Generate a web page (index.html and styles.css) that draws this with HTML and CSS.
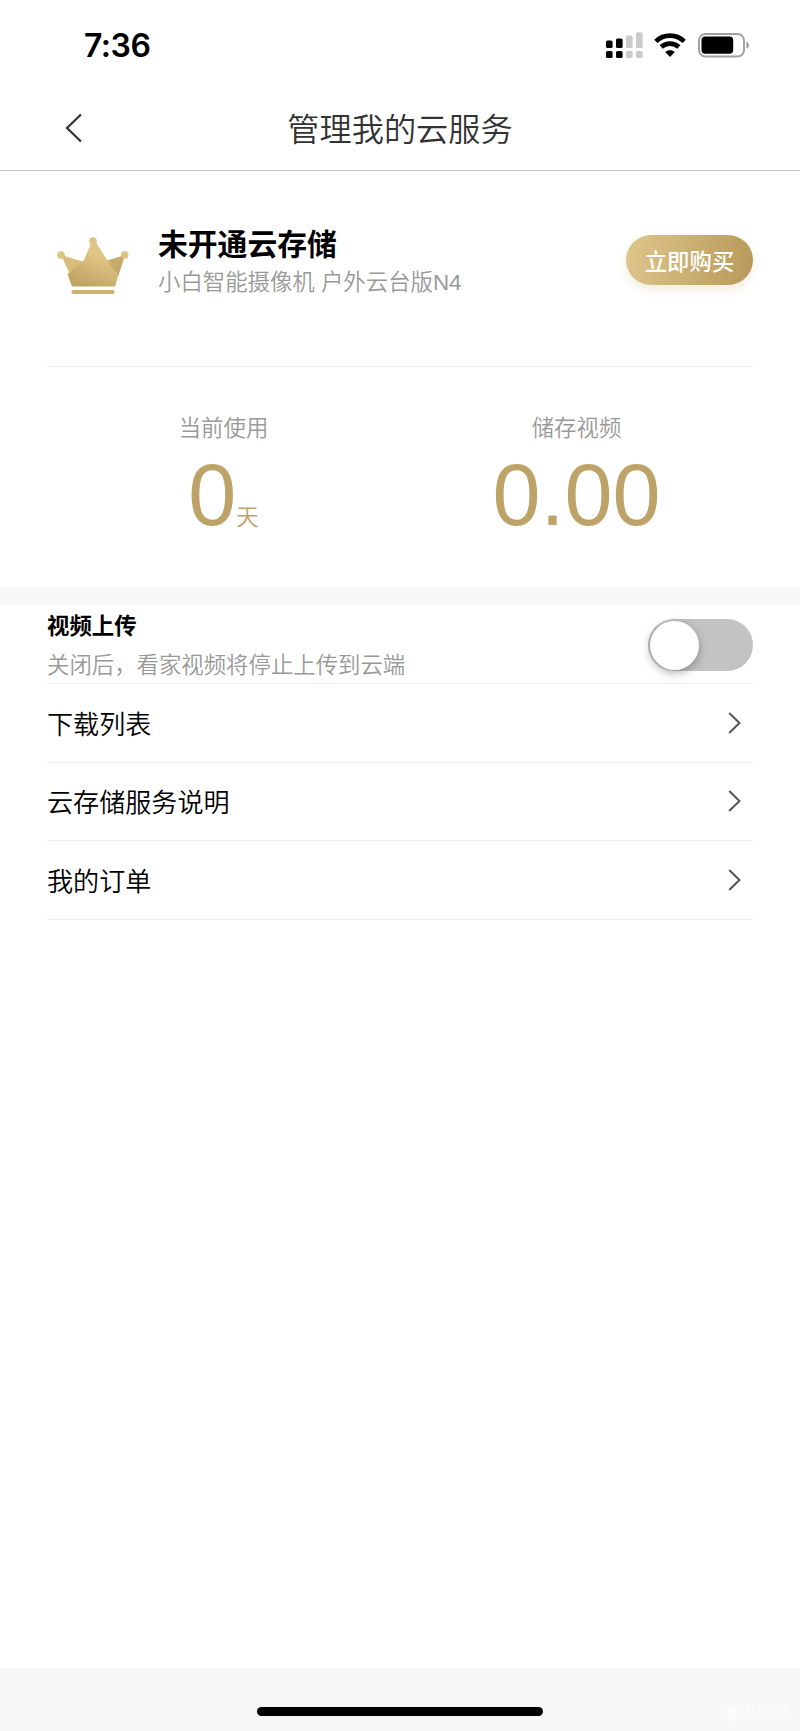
FILE: index.html
```html
<!DOCTYPE html>
<html lang="zh-CN">
<head>
    <meta charset="UTF-8">
    <meta name="viewport" content="width=device-width, initial-scale=1.0">
    <title>管理我的云服务</title>
    <link rel="stylesheet" href="styles.css">
</head>
<body>
    <div class="status-bar">
        <span class="time">7:36</span>
        <div class="status-icons">
            <svg class="signal" width="37" height="26" viewBox="0 0 37 26">
                <rect x="0" y="8.5" width="6.6" height="7.5" rx="1.6"/>
                <rect x="10" y="6.5" width="6.6" height="9.5" rx="1.6"/>
                <rect x="0" y="19" width="6.6" height="7" rx="1.6"/>
                <rect x="10" y="19" width="6.6" height="7" rx="1.6"/>
                <g fill="#cbcbcb">
                    <rect x="20" y="3.5" width="6.6" height="12.5" rx="1.6"/>
                    <rect x="30" y="0.3" width="6.6" height="15.7" rx="1.6"/>
                    <rect x="20" y="19" width="6.6" height="7" rx="1.6"/>
                    <rect x="30" y="19" width="6.6" height="7" rx="1.6"/>
                </g>
            </svg>
            <svg class="wifi" width="32" height="24" viewBox="0 0 32 24">
                <path d="M1.8 8.4C9.8.7 22.2.7 30.2 8.400" fill="none" stroke="#000" stroke-width="4.6"/>
                <path d="M7.2 14c4.900-4.500 12.700-4.500 17.600 0" fill="none" stroke="#000" stroke-width="4.6"/>
                <path d="M11.2 19c2.7-2.500 6.900-2.500 9.600 0L16 24z"/>
            </svg>
            <svg class="battery" width="52" height="25" viewBox="0 0 52 25">
                <rect x="1" y="1" width="45" height="22.5" rx="6.5" fill="none" stroke="#a0a0a0" stroke-width="1.9"/>
                <rect x="3.5" y="3.5" width="31.7" height="17.3" rx="3.7"/>
                <path d="M48.5 8.7c3 1 3 6 0 7z" fill="#909090"/>
            </svg>
        </div>
    </div>

    <header class="header">
        <svg class="back" width="18" height="30" viewBox="0 0 18 30">
            <path d="M16 1.5 2 15 16 28.5" fill="none" stroke="#333" stroke-width="2.2"/>
        </svg>
        <h1>管理我的云服务</h1>
    </header>

    <section class="service">
        <div class="service-info">
            <svg class="crown" width="72" height="58" viewBox="0 0 72 58">
                <defs>
                    <linearGradient id="gold" x1="0.6" y1="0.3" x2="0.3" y2="1">
                        <stop offset="0" stop-color="#e1c584"/>
                        <stop offset="1" stop-color="#bea363"/>
                    </linearGradient>
                    <linearGradient id="side" x1="0" y1="0" x2="1" y2="1">
                        <stop offset="0" stop-color="#ceb270"/>
                        <stop offset="1" stop-color="#bea264"/>
                    </linearGradient>
                </defs>
                <path d="M4 18 27 25 16 44z" fill="#d8bc7a"/>
                <path d="M68 18 45 25 61 40z" fill="url(#side)"/>
                <path d="M35 4h3L55 30.500 61.500 38 58 49.500H15L10.500 37 27 23z" fill="url(#gold)"/>
                <circle cx="36" cy="4" r="3.8" fill="#dfc382"/>
                <circle cx="4" cy="18" r="3.8" fill="#dfc382"/>
                <circle cx="67.7" cy="18" r="3.8" fill="#dfc382"/>
                <rect x="14.500" y="53" width="43" height="4" rx="1.8" fill="#cfb16e"/>
            </svg>
            <div class="service-text">
                <h2>未开通云存储</h2>
                <p>小白智能摄像机 户外云台版N4</p>
            </div>
            <button class="btn-buy">立即购买</button>
        </div>
        <div class="stats">
            <div class="stat">
                <p class="stat-label">当前使用</p>
                <p class="stat-value">0<span class="unit">天</span></p>
            </div>
            <div class="stat">
                <p class="stat-label">储存视频</p>
                <p class="stat-value">0.00</p>
            </div>
        </div>
    </section>

    <main class="settings">
        <div class="upload">
            <div>
                <h3>视频上传</h3>
                <p>关闭后，看家视频将停止上传到云端</p>
            </div>
            <div class="switch"><div class="knob"></div></div>
        </div>
        <div class="row">
            <span>下载列表</span>
            <svg width="13" height="22" viewBox="0 0 13 22"><path d="M1.2 1 11.500 11 1.200 21"/></svg>
        </div>
        <div class="row">
            <span>云存储服务说明</span>
            <svg width="13" height="22" viewBox="0 0 13 22"><path d="M1.2 1 11.500 11 1.200 21"/></svg>
        </div>
        <div class="row">
            <span>我的订单</span>
            <svg width="13" height="22" viewBox="0 0 13 22"><path d="M1.2 1 11.500 11 1.200 21"/></svg>
        </div>
    </main>

    <footer class="footer">
        <div class="home-indicator"></div>
        <div class="watermark">
            <svg width="24" height="24" viewBox="0 0 24 24">
                <circle cx="12" cy="12" r="10.8" fill="none" stroke="#fff" stroke-width="1.2"/>
                <path d="M4.5 12.5C4 8 8 4.500 12 4.500s8 3.500 7.500 8c-1 2-4 2-5 1l.8 5c0 2-6.600 2-6.600 0l.8-5c-1 1-4 1-5-1z" fill="#fff"/>
            </svg>
            <div class="watermark-text">
                <span>亿智蘑菇</span>
                <small>www.yizmg.com</small>
            </div>
        </div>
    </footer>
</body>
</html>
```
FILE: styles.css
```css
* {
    margin: 0;
    padding: 0;
    box-sizing: border-box;
}

body {
    font-family: "Liberation Sans", "Noto Sans CJK SC", sans-serif;
    height: 1731px;
    display: flex;
    flex-direction: column;
    background: #fff;
    color: #000;
    font-weight: 350;
}

/* Status bar */
.status-bar {
    height: 90px;
    padding: 0 50px 0 84px;
    display: flex;
    justify-content: space-between;
    align-items: center;
}

.time {
    font-family: Inter, sans-serif;
    font-size: 32px;
    font-weight: 600;
    letter-spacing: -0.5px;
}

.status-icons {
    display: flex;
    align-items: center;
}

.wifi {
    margin: 0 12px 0 11px;
}

/* Title bar */
.header {
    height: 81px;
    padding: 0 65px;
    display: grid;
    grid-template-columns: 18px 1fr 18px;
    align-items: center;
    border-bottom: 1px solid #c8c8c8;
}

.back {
    margin-top: -4px;
}

.header h1 {
    font-size: 32.2px;
    font-weight: 350;
    line-height: 40px;
    color: #333;
    text-align: center;
}

/* Cloud service card */
.service {
    height: 434px;
    padding: 0 47px;
    border-bottom: 18px solid #f7f7f7;
}

.service-info {
    height: 196px;
    padding: 50px 0 0 10px;
    display: flex;
    align-items: flex-start;
    border-bottom: 1px solid #eee;
}

.crown {
    margin: 16px 29px 0 0;
}

.service-text {
    flex: 1;
    padding-top: 2px;
}

.service-text h2 {
    font-size: 29.8px;
    font-weight: 700;
    line-height: 44px;
}

.service-text p {
    font-size: 22.4px;
    line-height: 32px;
    color: #999;
}

.btn-buy {
    width: 127px;
    height: 50px;
    margin-top: 14px;
    border: none;
    border-radius: 25px;
    background: linear-gradient(100deg, #dfc68b, #b6995a);
    box-shadow: 0 5px 10px rgba(190, 163, 99, 0.2);
    color: #fff;
    font-family: inherit;
    font-size: 22.4px;
    font-weight: 500;
}

.stats {
    display: flex;
    padding-top: 46px;
    text-align: center;
}

.stat {
    flex: 1;
}

.stat-label {
    font-size: 22.4px;
    line-height: 32px;
    color: #999;
}

.stat-value {
    font-size: 86.4px;
    line-height: 100px;
    color: #bda368;
}

.unit {
    font-size: 22.4px;
}

/* Settings list */
.settings {
    flex: 1;
    padding: 0 47px;
}

.upload {
    height: 79px;
    padding-top: 2px;
    display: flex;
    justify-content: space-between;
    align-items: center;
    border-bottom: 1px solid #eee;
}

.upload h3 {
    font-size: 22.4px;
    font-weight: 700;
    line-height: 39px;
    padding-top: 2px;
}

.upload p {
    font-size: 22.4px;
    line-height: 39px;
    color: #999;
}

.switch {
    width: 105px;
    height: 52px;
    padding: 2px;
    border-radius: 26px;
    background: #c3c3c3;
}

.knob {
    width: 49px;
    height: 49px;
    border-radius: 50%;
    background: #fff;
    box-shadow: 0 3px 10px rgba(0, 0, 0, 0.3);
}

.row {
    height: 78.6px;
    padding-right: 12px;
    display: flex;
    justify-content: space-between;
    align-items: center;
    border-bottom: 1px solid #eee;
    font-size: 26.1px;
}

.row path {
    fill: none;
    stroke: #555;
    stroke-width: 2;
}

/* Bottom area */
.footer {
    position: relative;
    height: 63px;
    padding-top: 39px;
    background: #f7f7f7;
}

.home-indicator {
    width: 286px;
    height: 9px;
    margin: 0 auto;
    border-radius: 5px;
    background: #000;
}

.watermark {
    position: absolute;
    right: 10px;
    bottom: 6px;
    display: flex;
    align-items: center;
    gap: 1px;
    color: #fff;
    opacity: 0.6;
}

.watermark-text {
    display: flex;
    flex-direction: column;
    width: 44px;
    white-space: nowrap;
}

.watermark-text span {
    font-size: 11px;
    font-weight: 700;
    line-height: 12px;
}

.watermark-text small {
    font-size: 6px;
    line-height: 7px;
}
```
